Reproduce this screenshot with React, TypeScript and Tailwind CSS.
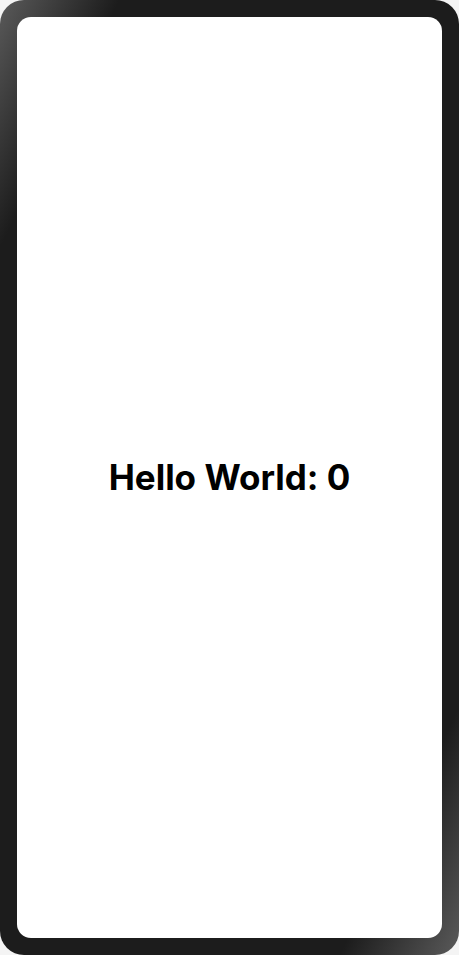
export default function App() {
  return (
    <div className="w-[459px] h-[955px] bg-[#f4f4f4]">
      <div className="w-full h-full rounded-[24px] p-[17px] bg-[linear-gradient(to_bottom_right,#5a5a5a_0%,#1c1c1c_13%,#1c1c1c_87%,#5a5a5a_100%)]">
        <div className="w-full h-full rounded-[14px] bg-white flex items-center justify-center">
          <span className="text-[35px] font-bold text-black leading-none" style={{ fontFamily: 'Inter, "Liberation Sans", sans-serif' }}>
            Hello World: 0
          </span>
        </div>
      </div>
    </div>
  );
}
